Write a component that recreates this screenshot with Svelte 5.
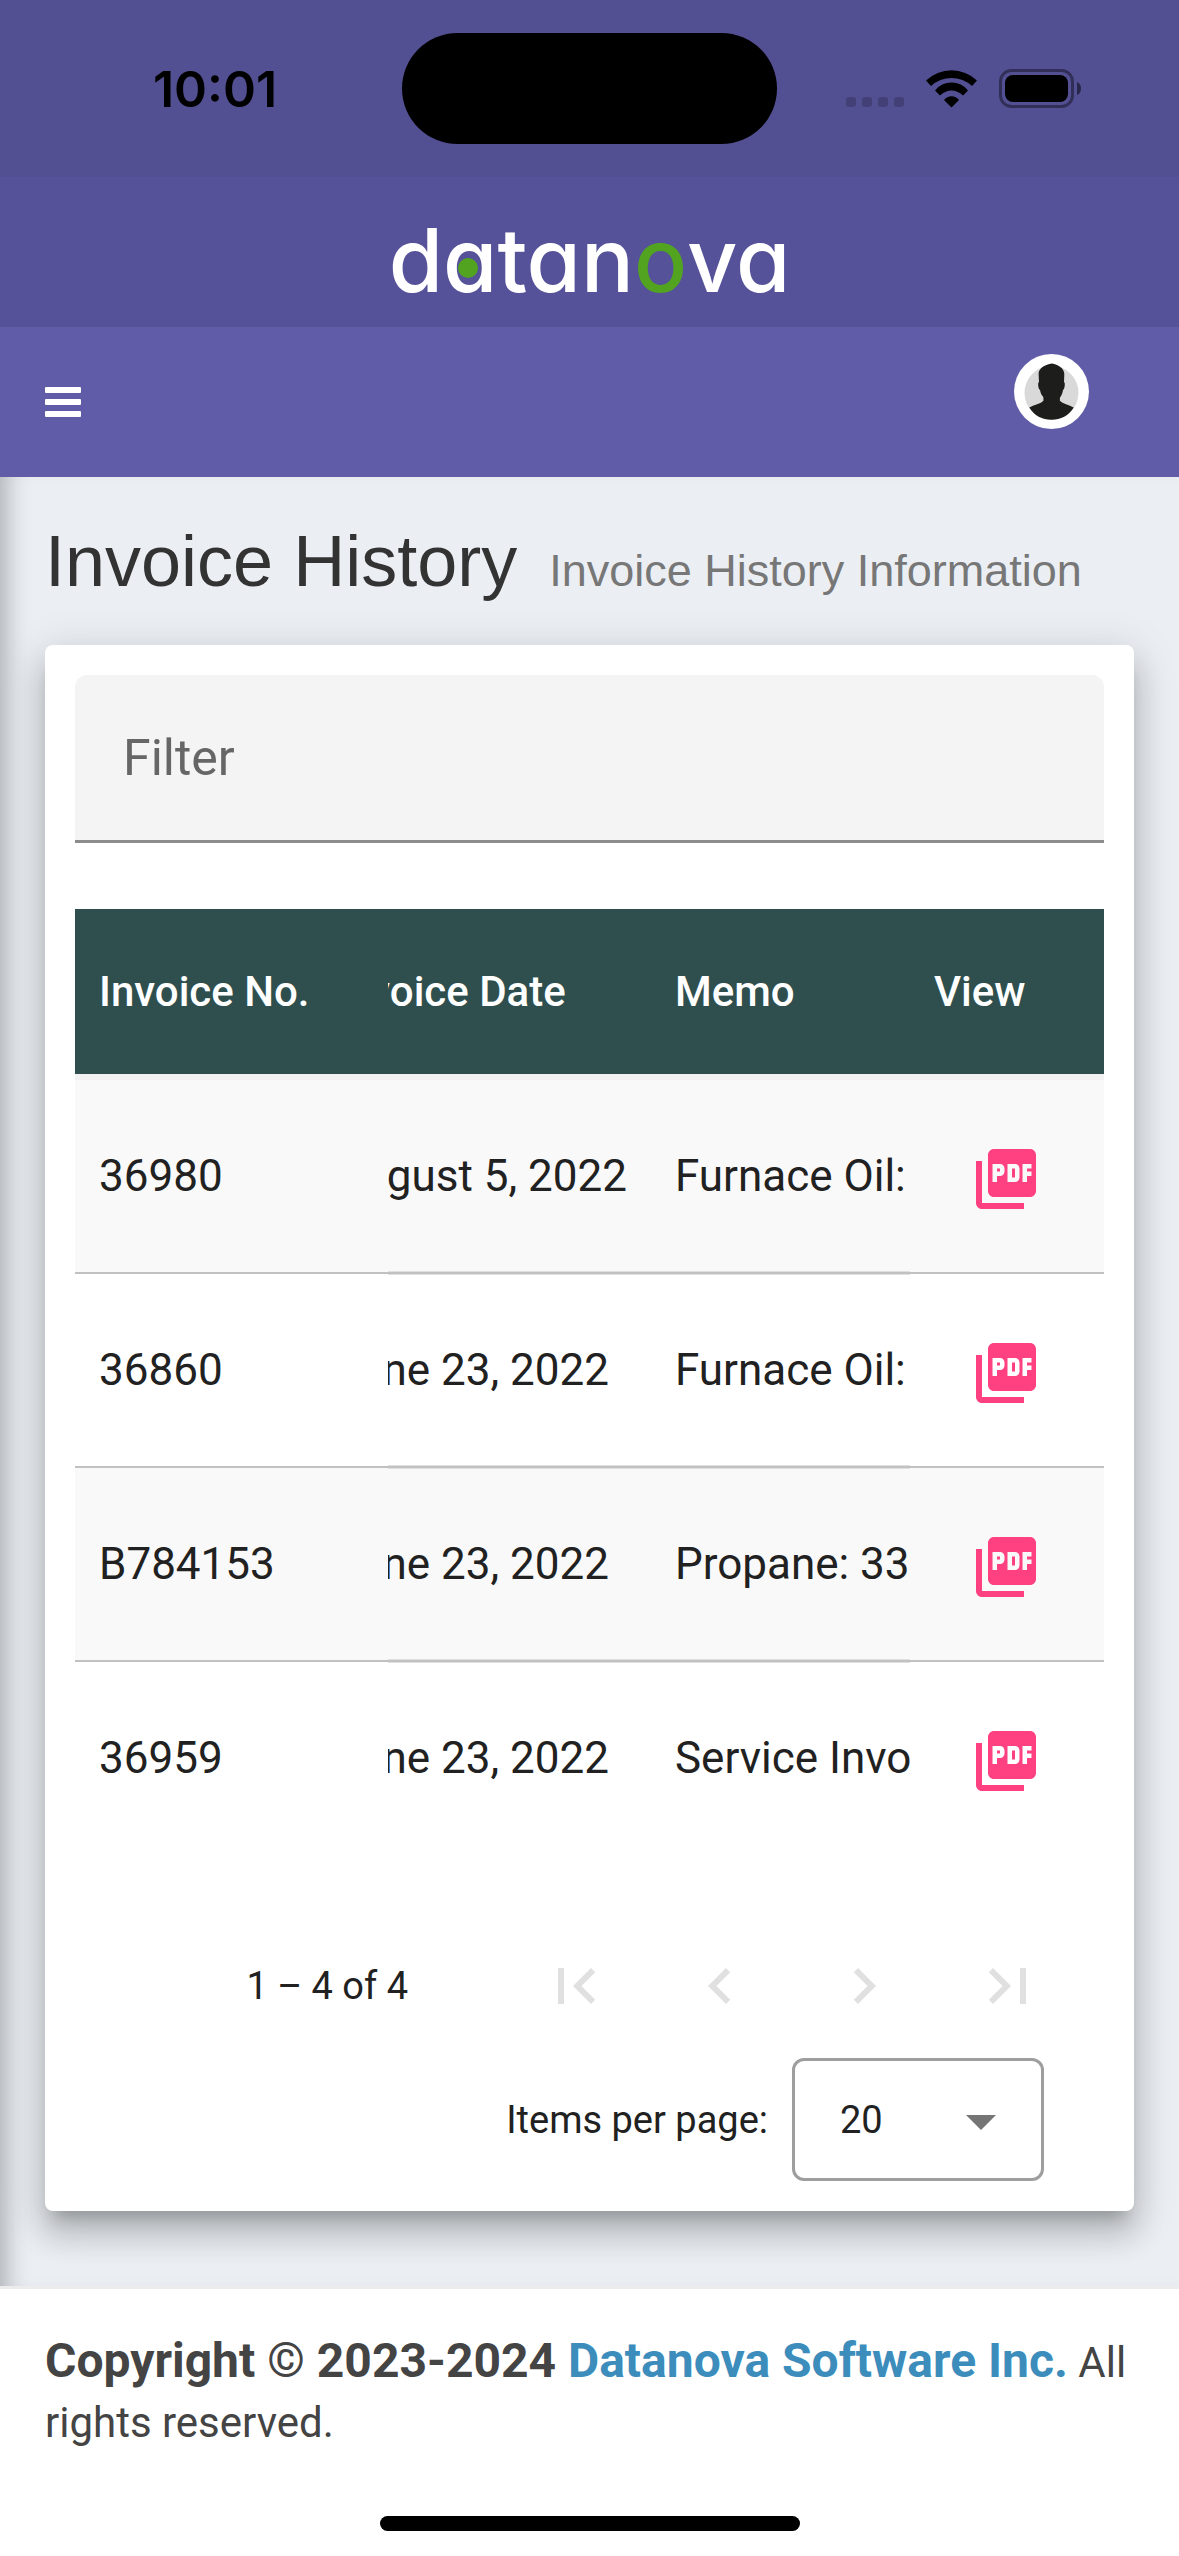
<script>
  import { onMount } from 'svelte';

  const invoices = [
    { no: '36980', date: 'August 5, 2022', memo: 'Furnace Oil:' },
    { no: '36860', date: 'June 23, 2022', memo: 'Furnace Oil:' },
    { no: 'B784153', date: 'June 23, 2022', memo: 'Propane: 333' },
    { no: '36959', date: 'June 23, 2022', memo: 'Service Invoice' }
  ];

  const pagerIcons = [
    { label: 'First page', d: 'M18.41 16.59L13.82 12l4.59-4.59L17 6l-6 6 6 6zM6 6h2v12H6z' },
    { label: 'Previous page', d: 'M15.41 7.41L14 6l-6 6 6 6 1.41-1.41L10.83 12z' },
    { label: 'Next page', d: 'M10 6L8.59 7.41 13.17 12l-4.58 4.59L10 18l6-6z' },
    { label: 'Last page', d: 'M5.59 7.41L10.18 12l-4.59 4.59L7 18l6-6-6-6zM16 6h2v12h-2z' }
  ];

  let filter = '';
  let pageSize = 20;
  let scroller;

  $: rows = invoices.filter((row) =>
    Object.values(row).join(' ').toLowerCase().includes(filter.trim().toLowerCase())
  );

  onMount(() => {
    // middle columns slide under the two sticky ones
    scroller.scrollLeft = 78;
  });
</script>

<div class="status-bar">
  <div class="status-side status-left">
    <span class="time">10:01</span>
  </div>
  <div class="island"></div>
  <div class="status-side status-right">
    <svg width="236" height="39" viewBox="0 0 236 39" aria-hidden="true">
      <g opacity="0.18">
        <rect x="0" y="28" width="10" height="10" rx="3" />
        <rect x="16" y="28" width="10" height="10" rx="3" />
        <rect x="32" y="28" width="10" height="10" rx="3" />
        <rect x="48" y="28" width="10" height="10" rx="3" />
      </g>
      <path d="M80 11.5A37 37 0 0 1 131 11.5L126 17A30 30 0 0 0 85 17Z" />
      <path d="M89 21.5A21 21 0 0 1 122 21.5L117 26.5A16 16 0 0 0 94 26.5Z" />
      <path d="M98 31A9.500 9.500 0 0 1 113 31L105.500 38.500Z" />
      <rect x="154.500" y="1.500" width="72" height="36" rx="11" fill="none" stroke="#000" stroke-width="3" opacity="0.4" />
      <rect x="159" y="6" width="63" height="27" rx="8" />
      <path d="M231 13C234 14 235 17 235 19.500S234 25 231 26Z" opacity="0.5" />
    </svg>
  </div>
</div>

<header>
  <a class="logo" href="#home" aria-label="datanova">
    <span>d</span><span class="dotted">a</span><span>tan</span><span class="green">o</span><span>va</span>
  </a>
  <nav>
    <button class="toggle" aria-label="Toggle navigation">
      <svg width="36" height="30" viewBox="0 0 36 30" aria-hidden="true">
        <rect width="36" height="6" rx="1" />
        <rect y="12" width="36" height="6" rx="1" />
        <rect y="24" width="36" height="6" rx="1" />
      </svg>
    </button>
    <button class="avatar" aria-label="Account">
      <svg width="75" height="75" viewBox="0 0 75 75" aria-hidden="true">
        <circle cx="37.500" cy="37.500" r="37.500" fill="#fff" />
        <circle cx="37.500" cy="38.800" r="27" fill="#d9d9d9" />
        <path
          fill="#1d1d1b"
          d="M38 9.500C44 10.500 50 14 50.300 20L50 28C51.500 28.500 50.800 35 49 36C48.500 39 47.500 41.500 46 43.500L45.800 46.500C48 49.500 54 50.500 59.700 53.500C55 61.500 46.500 65.800 37.500 65.800S20 61.500 15.300 53.500C21 50.500 27.500 49.500 29.500 46.500L29.300 43C27.500 41 26.500 39 26 36C24.200 35 23.500 28.500 25 28L24.600 19.500C25 14 31 10.500 38 9.500Z"
        />
      </svg>
    </button>
  </nav>
</header>

<main>
  <h1>Invoice History <small>Invoice History Information</small></h1>

  <section class="card">
    <input class="filter" type="text" placeholder="Filter" aria-label="Filter" bind:value={filter} />

    <div class="table-scroll" bind:this={scroller}>
      <table>
        <thead>
          <tr>
            <th class="first">Invoice No.</th>
            <th>Invoice Date</th>
            <th>Memo</th>
            <th class="last">View</th>
          </tr>
        </thead>
        <tbody>
          {#each rows as row}
            <tr>
              <td class="first">{row.no}</td>
              <td class="mid">{row.date}</td>
              <td class="mid">{row.memo}</td>
              <td class="last">
                <button class="icon-button pdf" aria-label="View invoice {row.no}">
                  <svg width="72" height="72" viewBox="0 0 24 24" aria-hidden="true">
                    <path
                      d="M20 2H8c-1.100 0-2 .9-2 2v12c0 1.100.9 2 2 2h12c1.100 0 2-.9 2-2V4c0-1.100-.9-2-2-2zm-8.500 7.500c0 .83-.67 1.500-1.500 1.500H9v2H7.500V7H10c.83 0 1.500.67 1.500 1.500v1zm5 2c0 .83-.67 1.500-1.500 1.500h-2.500V7H15c.83 0 1.500.67 1.500 1.500v3zm4-3H19v1h1.500V11H19v2h-1.500V7h3v1.500zM9 9.500h1v-1H9v1zM4 6H2v14c0 1.100.9 2 2 2h14v-2H4V6zm10 5.500h1v-3h-1v3z"
                    />
                  </svg>
                </button>
              </td>
            </tr>
          {/each}
        </tbody>
      </table>
    </div>

    <div class="paginator">
      <div class="range">
        <span class="range-label">1 – {rows.length} of {rows.length}</span>
        {#each pagerIcons as icon}
          <button class="icon-button" aria-label={icon.label} disabled>
            <svg width="72" height="72" viewBox="0 0 24 24" aria-hidden="true">
              <path d={icon.d} />
            </svg>
          </button>
        {/each}
      </div>
      <div class="page-size">
        <label for="page-size">Items per page:</label>
        <div class="select">
          <select id="page-size" bind:value={pageSize}>
            <option value={20}>20</option>
          </select>
          <svg width="30" height="15" viewBox="0 0 30 15" aria-hidden="true">
            <path d="M0 0h30L15 15z" />
          </svg>
        </div>
      </div>
    </div>
  </section>
</main>

<footer>
  <strong>Copyright © 2023-2024 <a href="#datanova">Datanova Software Inc.</a></strong> All rights reserved.
</footer>
<div class="home-indicator"></div>

<style>
  :global(body) {
    background: #fff;
    font-family: Roboto, 'Liberation Sans', sans-serif;
  }

  button {
    border: 0;
    padding: 0;
    background: none;
  }

  svg {
    display: block;
  }

  .status-bar {
    display: grid;
    grid-template-columns: 1fr 375px 1fr;
    padding: 33px 0;
    background: #534f93;
  }

  .status-side {
    display: flex;
    align-items: center;
    justify-content: center;
  }

  .status-left {
    padding-left: 28px;
  }

  .status-right {
    padding-right: 28px;
  }

  .time {
    font-family: Inter, sans-serif;
    font-size: 50px;
    font-weight: 600;
    line-height: 60px;
  }

  .island {
    height: 111px;
    border-radius: 56px;
    background: #000;
  }

  .logo {
    display: flex;
    justify-content: center;
    padding-top: 16px;
    background: #555299;
    color: #fff;
    font-family: Inter, sans-serif;
    font-size: 88px;
    font-weight: 500;
    font-feature-settings: 'cv11';
    line-height: 134px;
    text-decoration: none;
  }

  .green {
    color: #52a31f;
  }

  .dotted {
    position: relative;
  }

  .dotted::after {
    content: '';
    position: absolute;
    left: 15px;
    top: 65px;
    width: 20px;
    height: 20px;
    border-radius: 50%;
    background: #52a31f;
  }

  nav {
    display: flex;
    justify-content: space-between;
    align-items: center;
    height: 150px;
    padding: 0 90px 0 45px;
    background: #605ca8;
  }

  .toggle {
    fill: #fff;
  }

  .avatar {
    align-self: flex-start;
    margin-top: 27px;
  }

  main {
    padding: 44px 45px 75px;
    background: #ebeff4;
    box-shadow: inset 24px 0 24px -18px rgba(0, 0, 0, 0.28);
  }

  h1 {
    margin: 0 0 44px;
    color: #333;
    font-family: 'Liberation Sans', sans-serif;
    font-size: 72px;
    font-weight: 400;
    line-height: 80px;
    white-space: nowrap;
  }

  small {
    margin-left: 12px;
    color: #777;
    font-size: 45px;
    line-height: 45px;
  }

  .card {
    padding: 30px;
    border-radius: 8px;
    background: #fff;
    box-shadow:
      0 15px 15px -9px rgba(0, 0, 0, 0.2),
      0 24px 30px 3px rgba(0, 0, 0, 0.14),
      0 9px 42px 6px rgba(0, 0, 0, 0.12);
  }

  .filter {
    display: block;
    box-sizing: border-box;
    width: 100%;
    height: 168px;
    margin-bottom: 66px;
    padding: 0 48px;
    border: 0;
    border-bottom: 3px solid #8c8c8c;
    border-radius: 12px 12px 0 0;
    background: #f4f4f4;
    color: #212121;
    font-family: inherit;
    font-size: 50px;
  }

  .filter::placeholder {
    color: #666;
    opacity: 1;
  }

  .table-scroll {
    overflow-x: auto;
    scrollbar-width: none;
  }

  table {
    min-width: 100%;
    border-spacing: 0;
    color: #212121;
    font-size: 44px;
    line-height: 60px;
    white-space: nowrap;
  }

  th,
  td {
    padding: 0 24px;
    text-align: left;
  }

  th {
    height: 165px;
    border-bottom: 6px solid #f2f2f2;
    background: #2f4f4f;
    color: #fff;
    font-size: 42px;
    font-weight: 500;
  }

  td {
    border-bottom: 2px solid #c1c1c1;
    background: #fff;
  }

  tr:nth-child(odd) td {
    background: #f9f9f9;
  }

  tr:last-child td {
    border-bottom: 0;
  }

  .mid {
    box-shadow: inset 0 -1px #e0e0e0, inset 0 1px #e0e0e0;
  }

  tr:first-child .mid {
    box-shadow: inset 0 -1px #e0e0e0;
  }

  tr:last-child .mid {
    box-shadow: inset 0 1px #e0e0e0;
  }

  .first,
  .last {
    position: sticky;
    z-index: 1;
  }

  .first {
    left: 0;
    min-width: 265px;
  }

  .last {
    right: 0;
    min-width: 146px;
  }

  td.last {
    padding: 27px 24px 21px;
  }

  .icon-button {
    display: block;
    padding: 36px;
    fill: #e0e0e0;
  }

  .pdf {
    fill: #ff4081;
  }

  .paginator {
    display: flex;
    flex-direction: column;
    align-items: flex-end;
    margin-top: 60px;
    color: #212121;
    font-size: 38px;
  }

  .range {
    display: flex;
    align-items: center;
    padding-right: 24px;
  }

  .range-label {
    margin-right: 96px;
  }

  .page-size {
    display: flex;
    align-items: center;
    gap: 24px;
    padding-right: 60px;
  }

  .select {
    position: relative;
  }

  select {
    display: block;
    appearance: none;
    width: 252px;
    height: 123px;
    padding: 0 45px;
    border: 3px solid #9e9e9e;
    border-radius: 12px;
    background: #fff;
    color: inherit;
    font-family: inherit;
    font-size: 38px;
  }

  .select svg {
    position: absolute;
    right: 48px;
    top: 57px;
    fill: #757575;
    pointer-events: none;
  }

  footer {
    padding: 42px 45px 0;
    border-top: 3px solid #ececec;
    color: #444;
    font-size: 42px;
    line-height: 60px;
  }

  strong {
    font-size: 48px;
  }

  footer a {
    color: #3c8dbc;
    text-decoration: none;
  }

  .home-indicator {
    width: 420px;
    height: 15px;
    margin: 63px auto 24px;
    border-radius: 8px;
    background: #000;
  }
</style>
